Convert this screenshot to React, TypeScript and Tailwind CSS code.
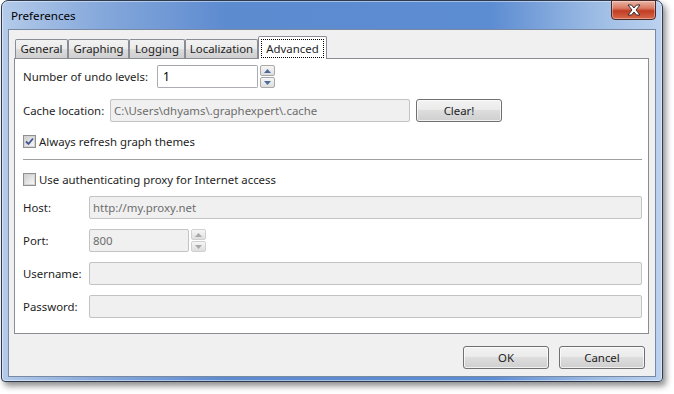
import React from "react";

const tabs = ["General", "Graphing", "Logging", "Localization", "Advanced"];
const tabWidths: Record<string, string> = {
  General: "w-[53px]",
  Graphing: "w-[61px]",
  Logging: "w-[56px]",
  Localization: "w-[73px]",
  Advanced: "w-[69px]",
};

const SpinButtons = ({ disabled }: { disabled?: boolean }) => {
  const border = disabled ? "border-[#d0d0d0]" : "border-[#a9a9a9]";
  const arrow = disabled ? "#a8a8a8" : "#4c6a9c";
  return (
    <div className="ml-[2px] flex h-[23px] w-[15px] flex-col gap-[1px]">
      <div
        className={`flex h-[11px] items-center justify-center rounded-[2px] border ${border} bg-[linear-gradient(#f6f6f6,#dedede)]`}
      >
        <svg width="7" height="4" viewBox="0 0 7 4">
          <path d="M0 4 L3.5 0 L7 4 Z" fill={arrow} />
        </svg>
      </div>
      <div
        className={`flex h-[11px] items-center justify-center rounded-[2px] border ${border} bg-[linear-gradient(#f6f6f6,#dedede)]`}
      >
        <svg width="7" height="4" viewBox="0 0 7 4">
          <path d="M0 0 L7 0 L3.5 4 Z" fill={arrow} />
        </svg>
      </div>
    </div>
  );
};

const Checkbox = ({ checked }: { checked?: boolean }) => (
  <div className="flex h-[13px] w-[13px] items-center justify-center border border-[#8e8f8f] bg-[#f4f4f4]">
    <div className="flex h-[11px] w-[11px] items-center justify-center border border-[#d4d4d4] bg-[linear-gradient(135deg,#cfcfcf,#f7f7f7)]">
      {checked && (
        <svg width="9" height="9" viewBox="0 0 9 9">
          <path
            d="M1 4.5 L3.5 7 L8 1.5"
            fill="none"
            stroke="#3f5690"
            strokeWidth="1.8"
          />
        </svg>
      )}
    </div>
  </div>
);

const Button = ({ label, w }: { label: string; w: string }) => (
  <button
    className={`${w} h-[23px] rounded-[3px] border border-[#707070] bg-[linear-gradient(#f2f2f2_0%,#ebebeb_45%,#dddddd_50%,#cfcfcf_100%)] text-[11.4px] text-[#1e1e1e] shadow-[inset_0_0_0_1px_rgba(255,255,255,0.7)]`}
  >
    {label}
  </button>
);

const DisabledInput = ({ value, w }: { value?: string; w: string }) => (
  <div
    className={`${w} flex h-[23px] items-center rounded-[2px] border border-[#c3c3c3] bg-[#f0f0f0] pl-[3px] text-[#6d6d6d]`}
  >
    {value}
  </div>
);

export default function App() {
  return (
    <div className="h-[394px] w-[674px] bg-white font-['Noto_Sans',sans-serif] text-[11.4px] text-[#1e1e1e]">
      <div className="ml-[1px] flex h-[382px] w-[662px] flex-col rounded-t-[7px] rounded-b-[4px] border border-[#2e3b4f] bg-[linear-gradient(90deg,#b4cbea_0%,#88aadc_14%,#5d8bd0_34%,#5c8cd2_74%,#9dbce4_90%,#bcd2ef_100%)] shadow-[inset_0_0_0_1px_rgba(255,255,255,0.45),3px_4px_6px_rgba(0,0,0,0.45)]">
        {/* title bar */}
        <div className="flex h-[28px] items-start justify-between">
          <span className="pl-[9px] pt-[6px] text-[11.6px] text-black">Preferences</span>
          <div className="mr-[6px] -mt-[1px] flex h-[20px] w-[45px] items-center justify-center rounded-b-[4px] border border-[#4a2a26] bg-[linear-gradient(#eab4a6_0%,#d97a63_40%,#c13c22_55%,#d8684c_100%)] shadow-[inset_0_0_0_1px_rgba(255,255,255,0.35)]">
            <svg width="14" height="12" viewBox="0 0 14 12">
              <path
                d="M1 1 L4.5 1 L7 4 L9.5 1 L13 1 L9 6 L13 11 L9.5 11 L7 8 L4.5 11 L1 11 L5 6 Z"
                fill="white"
                stroke="#3b2a2a"
                strokeWidth="1"
                strokeLinejoin="round"
              />
            </svg>
          </div>
        </div>

        {/* client area */}
        <div className="mx-[6px] mb-[4px] flex flex-1 flex-col border border-[#7889a3] bg-[#f0f0f0] pl-[5px] pr-[6px] pt-[6px]">
          {/* tabs */}
          <div className="flex h-[22px] items-end pl-[1px]">
            {tabs.map((t) =>
              t === "Advanced" ? (
                <div
                  key={t}
                  className={`${tabWidths[t]} relative z-10 -mb-[1px] flex h-[23px] items-start rounded-t-[2px] border border-b-0 border-[#898c95] bg-white px-[2px] pt-[2px]`}
                >
                  <div className="flex h-[19px] w-full items-center justify-center border border-dotted border-black">
                    {t}
                  </div>
                </div>
              ) : (
                <div
                  key={t}
                  className={`${tabWidths[t]} flex h-[19px] items-center justify-center rounded-t-[2px] border border-b-0 border-[#898c95] bg-[linear-gradient(#f2f2f2_0%,#ebebeb_50%,#dddddd_51%,#cfcfcf_100%)]`}
                >
                  {t}
                </div>
              )
            )}
          </div>

          {/* pane */}
          <div className="flex flex-1 flex-col border border-[#898c95] bg-white pl-[8px] pr-[6px] pt-[6px]">
            <div className="flex h-[23px] items-center">
              <span className="w-[134px]">Number of undo levels:</span>
              <div className="flex h-[23px] w-[101px] items-center rounded-[2px] border border-[#abadb3] border-t-[#a4a6ac] bg-white pl-[5px] text-[12px] text-black">
                1
              </div>
              <SpinButtons />
            </div>

            <div className="mt-[11px] flex h-[23px] items-center">
              <span className="w-[87px]">Cache location:</span>
              <DisabledInput w="w-[300px]" value="C:\Users\dhyams\.graphexpert\.cache" />
              <div className="ml-[6px]">
                <Button label="Clear!" w="w-[86px]" />
              </div>
            </div>

            <div className="mt-[11px] flex h-[17px] items-center gap-[3px]">
              <Checkbox checked />
              <span>Always refresh graph themes</span>
            </div>

            <div className="mt-[9px] h-[1px] bg-[#a0a0a0]" />

            <div className="mt-[11px] flex h-[17px] items-center gap-[3px]">
              <Checkbox />
              <span>Use authenticating proxy for Internet access</span>
            </div>

            <div className="mt-[8px] flex h-[23px] items-center">
              <span className="w-[66px]">Host:</span>
              <DisabledInput w="flex-1" value="http://my.proxy.net" />
            </div>

            <div className="mt-[10px] flex h-[23px] items-center">
              <span className="w-[66px]">Port:</span>
              <DisabledInput w="w-[100px]" value="800" />
              <SpinButtons disabled />
            </div>

            <div className="mt-[10px] flex h-[23px] items-center">
              <span className="w-[66px]">Username:</span>
              <DisabledInput w="flex-1" />
            </div>

            <div className="mt-[10px] flex h-[23px] items-center">
              <span className="w-[66px]">Password:</span>
              <DisabledInput w="flex-1" />
            </div>
          </div>

          {/* dialog buttons */}
          <div className="mb-[7px] mt-[12px] flex h-[23px] justify-end gap-[10px] pr-[4px]">
            <Button label="OK" w="w-[86px]" />
            <Button label="Cancel" w="w-[86px]" />
          </div>
        </div>
      </div>
    </div>
  );
}
